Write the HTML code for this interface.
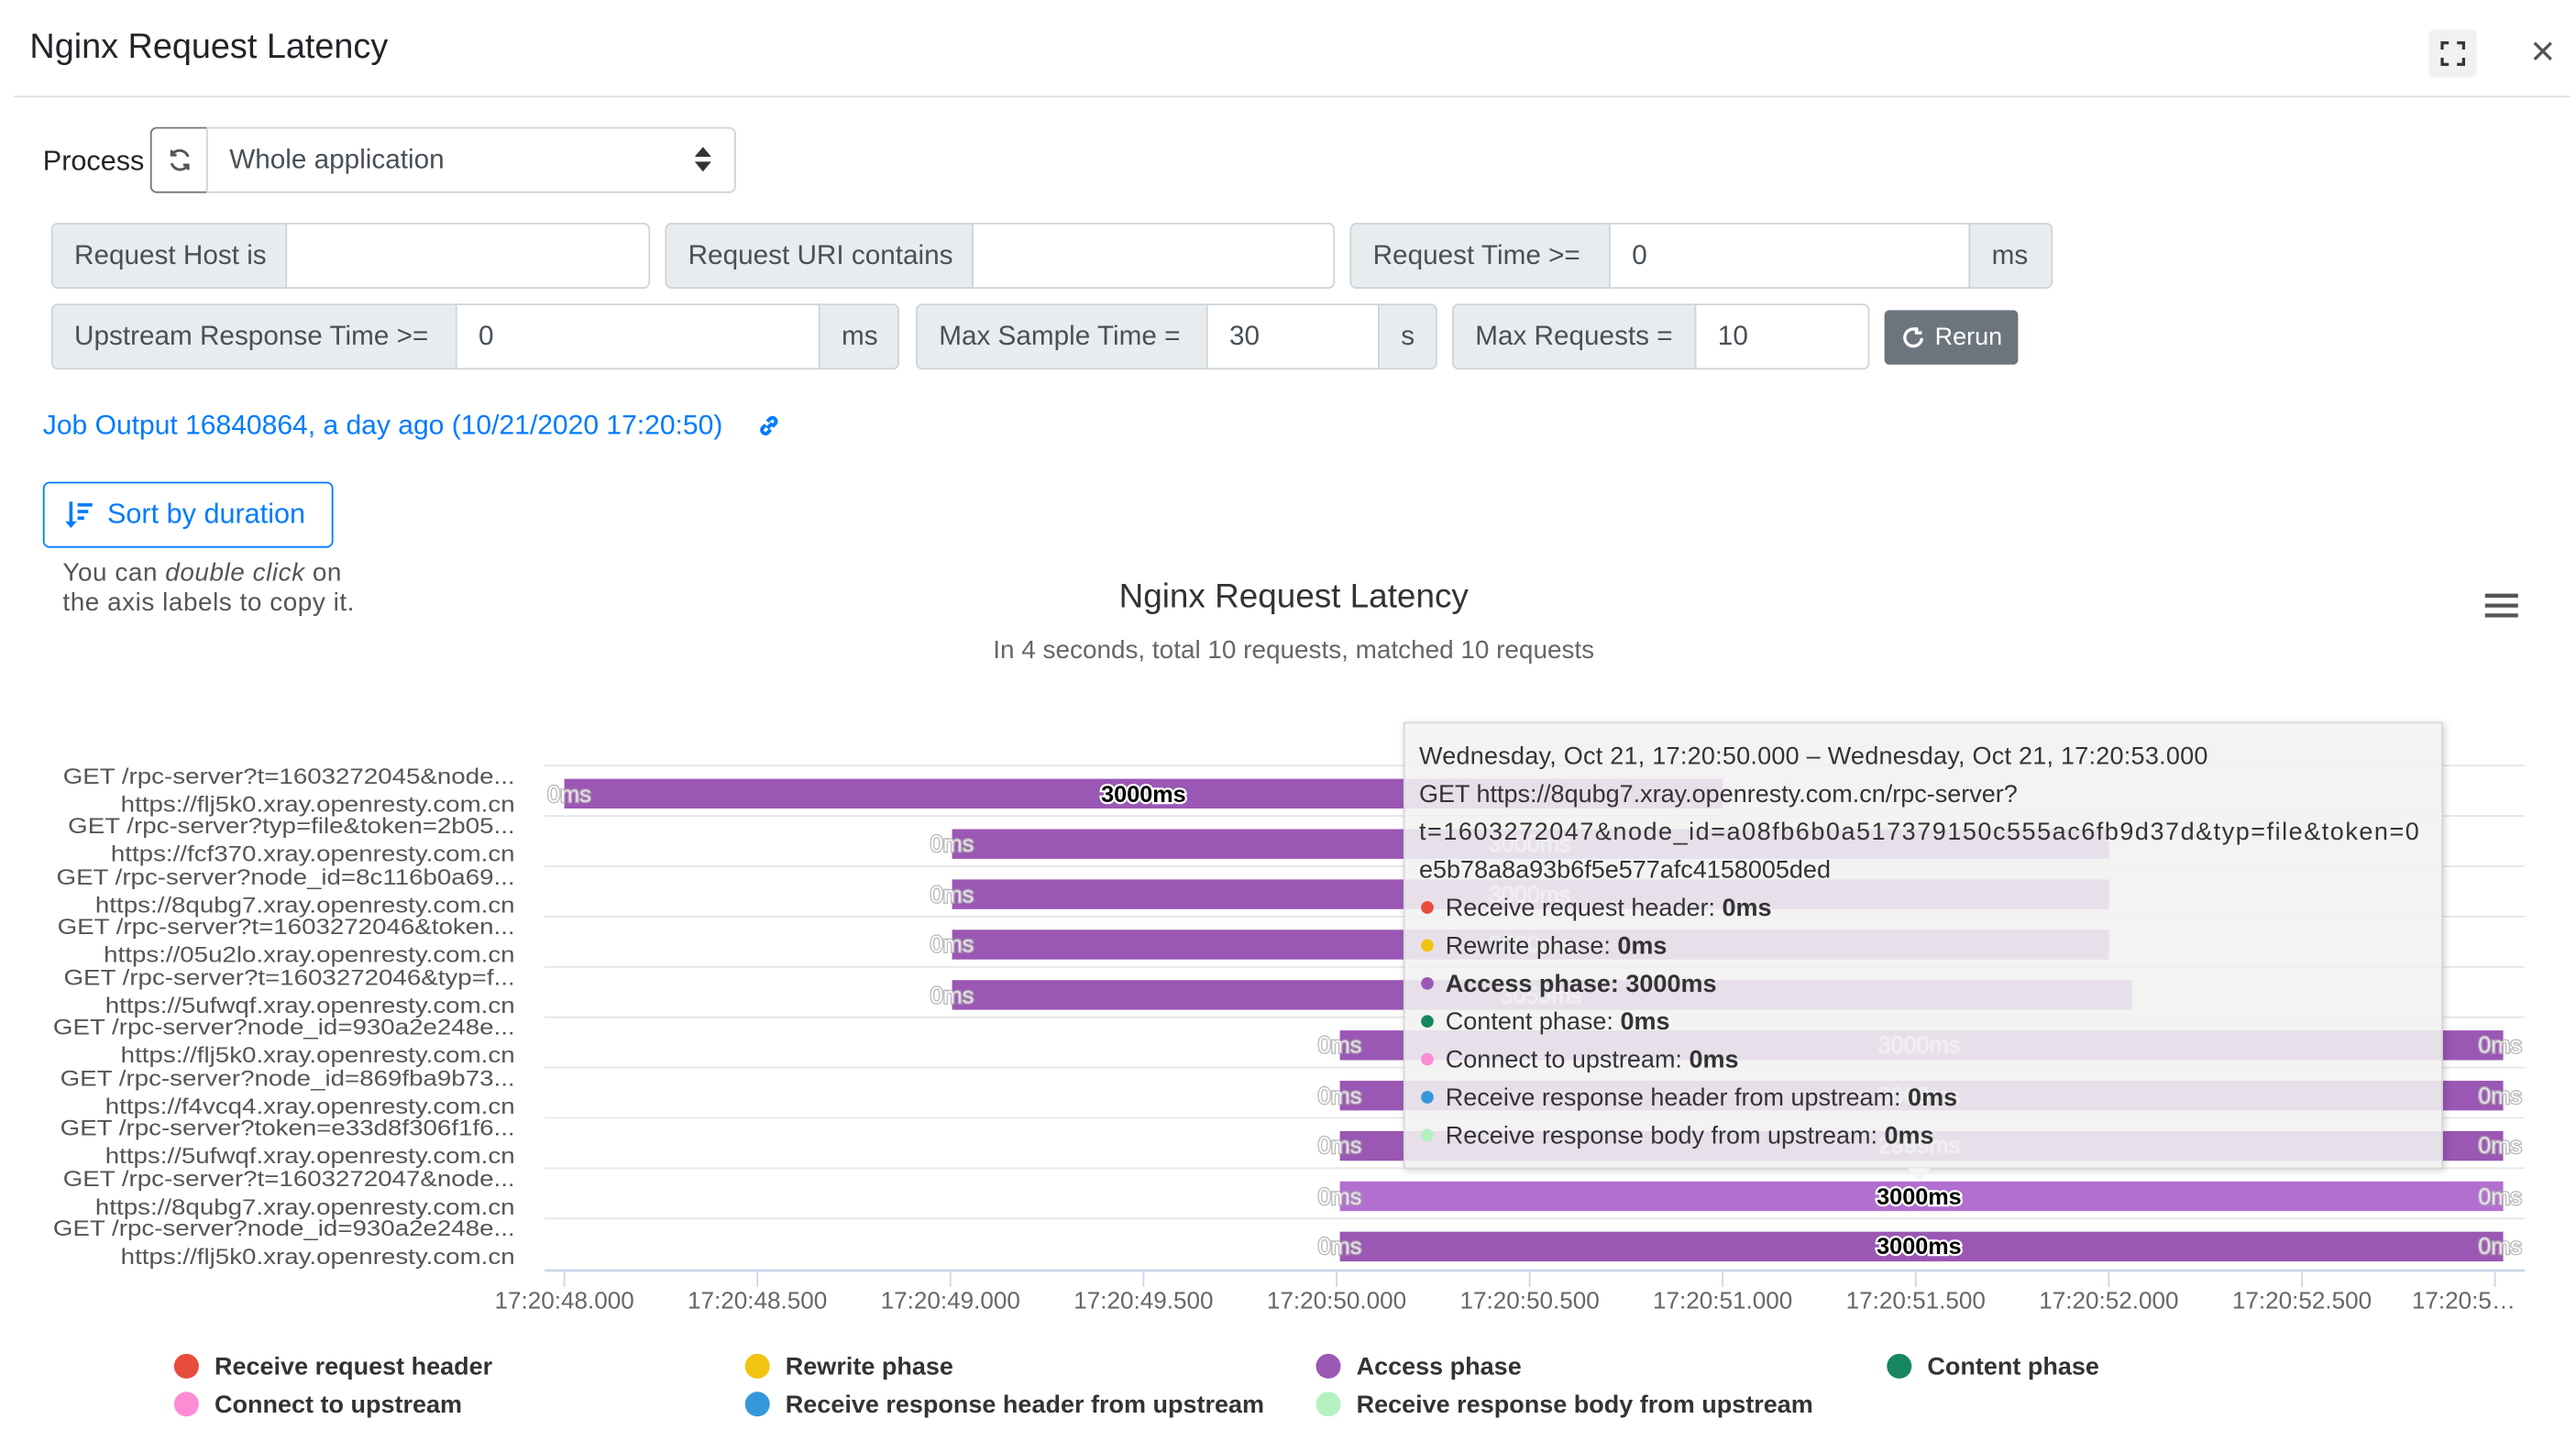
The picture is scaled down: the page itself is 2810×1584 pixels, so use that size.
<!DOCTYPE html>
<html><head><meta charset="utf-8"><style>
html,body{margin:0;padding:0;background:#fff;}
body{width:2810px;height:1583px;overflow:hidden;}
#w{position:absolute;left:0;top:0;width:1561px;height:880px;transform:scale(1.8);transform-origin:0 0;font-family:"Liberation Sans",sans-serif;color:#212529;}
.a{position:absolute;}
.box{position:absolute;box-sizing:border-box;border:1px solid #ced4da;font-size:16.5px;color:#495057;display:flex;align-items:center;padding-left:13px;}
.ad{background:#e9ecef;}
.in{background:#fff;}
</style></head><body><div id="w">
<div class="a" style="left:18px;top:17px;font-size:21px;font-weight:500;color:#212529">Nginx Request Latency</div>
<div class="a" style="left:8px;top:58px;width:1550px;height:1px;background:#dee2e6"></div>
<div class="a" style="left:1472px;top:18px;width:29px;height:29px;background:#f1f1f1;border-radius:3px"></div>
<svg class="a" style="left:1479px;top:25px" width="15" height="15" viewBox="0 0 15 15" fill="none" stroke="#333" stroke-width="1.8"><path d="M1 5V1h4M10 1h4v4M14 10v4h-4M5 14H1v-4"/></svg>
<svg class="a" style="left:1535px;top:25px" width="12" height="12" viewBox="0 0 12 12" stroke="#555" stroke-width="1.8"><path d="M1 1l10 10M11 1L1 11"/></svg>

<div class="a" style="left:26px;top:88px;font-size:17px;color:#212529">Process</div>
<div class="box" style="left:91px;top:77px;width:35px;height:40px;border-color:#6c757d;border-radius:4px 0 0 4px;padding:0;justify-content:center">
<svg width="16" height="16" viewBox="0 0 16 16" fill="none" stroke="#555" stroke-width="1.6"><path d="M13 6A5.5 5.5 0 0 0 3 5M3 2v3h3M3 10a5.5 5.5 0 0 0 10 1M13 14v-3h-3"/></svg></div>
<div class="box in" style="left:125px;top:77px;width:321px;height:40px;border-radius:0 4px 4px 0">Whole application</div>
<svg class="a" style="left:421px;top:89px" width="10" height="15" viewBox="0 0 10 15" fill="#333"><path d="M5 0L10 6H0zM5 15L0 9h10z"/></svg>

<div class="box ad" style="left:31px;top:135px;width:143px;height:40px;border-radius:4px 0 0 4px">Request Host is</div>
<div class="box in" style="left:173px;top:135px;width:221px;height:40px;border-radius:0 4px 4px 0"></div>
<div class="box ad" style="left:403px;top:135px;width:187px;height:40px;border-radius:4px 0 0 4px">Request URI contains</div>
<div class="box in" style="left:589px;top:135px;width:220px;height:40px;border-radius:0 4px 4px 0"></div>
<div class="box ad" style="left:818px;top:135px;width:158px;height:40px;border-radius:4px 0 0 4px">Request Time &gt;=</div>
<div class="box in" style="left:975px;top:135px;width:219px;height:40px">0</div>
<div class="box ad" style="left:1193px;top:135px;width:51px;height:40px;border-radius:0 4px 4px 0">ms</div>

<div class="box ad" style="left:31px;top:184px;width:246px;height:40px;border-radius:4px 0 0 4px">Upstream Response Time &gt;=</div>
<div class="box in" style="left:276px;top:184px;width:221px;height:40px">0</div>
<div class="box ad" style="left:496px;top:184px;width:49px;height:40px;border-radius:0 4px 4px 0">ms</div>
<div class="box ad" style="left:555px;top:184px;width:177px;height:40px;border-radius:4px 0 0 4px">Max Sample Time =</div>
<div class="box in" style="left:731px;top:184px;width:105px;height:40px">30</div>
<div class="box ad" style="left:835px;top:184px;width:36px;height:40px;border-radius:0 4px 4px 0">s</div>
<div class="box ad" style="left:880px;top:184px;width:148px;height:40px;border-radius:4px 0 0 4px">Max Requests =</div>
<div class="box in" style="left:1027px;top:184px;width:106px;height:40px;border-radius:0 4px 4px 0">10</div>
<div class="a" style="left:1142px;top:188px;width:81px;height:33px;background:#6c757d;border-radius:3px;color:#fff;font-size:15px;display:flex;align-items:center;justify-content:center;gap:6px">
<svg width="15" height="15" viewBox="0 0 16 16" fill="none" stroke="#fff" stroke-width="2"><path d="M13.5 8.5A5.5 5.5 0 1 1 11 3.5M10 1.5v3.5h3.5"/></svg>Rerun</div>

<div class="a" style="left:26px;top:248px;font-size:16.7px;color:#007bff">Job Output 16840864, a day ago (10/21/2020 17:20:50)</div>
<svg class="a" style="left:458px;top:250px" width="16" height="16" viewBox="0 0 16 16" fill="none" stroke="#007bff" stroke-width="2.2"><path d="M7 9.5l3-3M6 7.5L4 9.5a2.2 2.2 0 0 0 3 3l2-2M10 8.5l2-2a2.2 2.2 0 0 0-3-3l-2 2"/></svg>

<div class="a" style="left:26px;top:292px;width:176px;height:40px;box-sizing:border-box;border:1px solid #007bff;border-radius:4px;color:#007bff;font-size:17px;display:flex;align-items:center;padding-left:12px;gap:8px">
<svg width="18" height="18" viewBox="0 0 18 18" fill="#007bff"><path d="M3 1h2v12h2.5L4 17 0.5 13H3z"/><rect x="8" y="2" width="9" height="2"/><rect x="8" y="6" width="6.5" height="2"/><rect x="8" y="10" width="4" height="2"/></svg>Sort by duration</div>
<div class="a" style="left:38px;top:339px;font-size:15.5px;color:#555;line-height:18px;letter-spacing:0.3px">You can <i>double click</i> on<br>the axis labels to copy it.</div>

<svg class="a" style="left:0;top:0" width="1561" height="880" font-family="Liberation Sans, sans-serif">
<text x="784" y="368" text-anchor="middle" font-size="20.5" fill="#333">Nginx Request Latency</text>
<text x="784" y="399" text-anchor="middle" font-size="15.5" fill="#666">In 4 seconds, total 10 requests, matched 10 requests</text>
<g stroke="#555" stroke-width="2.4"><path d="M1506 361h20M1506 367h20M1506 373h20"/></g>
<g stroke="#e6e6e6" stroke-width="1">
<path d="M330 464h1200M330 494.5h1200M330 525h1200M330 555.5h1200M330 586h1200M330 616.5h1200M330 647h1200M330 677.5h1200M330 708h1200M330 738.5h1200"/>
</g>
<path d="M330 770h1200" stroke="#ccd6eb" stroke-width="1.5"/>
<g stroke="#ccd6eb"><path d="M342 770v10M459 770v10M576 770v10M693 770v10M810 770v10M927 770v10M1044 770v10M1161 770v10M1278 770v10M1395 770v10M1512 770v10"/></g>
<g font-size="14.5" fill="#666" text-anchor="middle">
<text x="342" y="793">17:20:48.000</text><text x="459" y="793">17:20:48.500</text><text x="576" y="793">17:20:49.000</text><text x="693" y="793">17:20:49.500</text><text x="810" y="793">17:20:50.000</text><text x="927" y="793">17:20:50.500</text><text x="1044" y="793">17:20:51.000</text><text x="1161" y="793">17:20:51.500</text><text x="1278" y="793">17:20:52.000</text><text x="1395" y="793">17:20:52.500</text><text x="1493" y="793">17:20:5…</text>
</g>
<g fill="#9b57b4">
<rect x="342" y="472" width="702" height="18"/>
<rect x="577" y="502.5" width="701" height="18"/>
<rect x="577" y="533" width="701" height="18"/>
<rect x="577" y="563.5" width="701" height="18"/>
<rect x="577" y="594" width="715" height="18"/>
<rect x="812" y="624.5" width="705" height="18"/>
<rect x="812" y="655" width="705" height="18"/>
<rect x="812" y="685.5" width="705" height="18"/>
<rect x="812" y="716" width="705" height="18" fill="#b26fcf"/>
<rect x="812" y="746.5" width="705" height="18"/>
</g>
<g font-size="14" font-weight="bold" text-anchor="middle" paint-order="stroke" stroke="#fff" stroke-width="2.5" fill="#000">
<text x="693" y="486">3000ms</text>
<text x="1163" y="730">3000ms</text>
<text x="1163" y="760">3000ms</text>
</g>
<g font-size="14" text-anchor="middle" paint-order="stroke" stroke="#aaa" stroke-width="1.5" fill="#fff" opacity="0.8">
<text x="345" y="486">0ms</text><text x="577" y="516">0ms</text><text x="577" y="547">0ms</text><text x="577" y="577">0ms</text><text x="577" y="608">0ms</text>
<text x="812" y="638">0ms</text><text x="812" y="669">0ms</text><text x="812" y="699">0ms</text><text x="812" y="730">0ms</text><text x="812" y="760">0ms</text>
<text x="1515" y="638">0ms</text><text x="1515" y="669">0ms</text><text x="1515" y="699">0ms</text><text x="1515" y="730">0ms</text><text x="1515" y="760">0ms</text>
<text x="927" y="516">3000ms</text><text x="927" y="547">3000ms</text><text x="927" y="577">3000ms</text><text x="934" y="608">3059ms</text>
<text x="1163" y="638">3000ms</text><text x="1163" y="669">3000ms</text><text x="1163" y="699">2999ms</text>
</g>
<g font-size="13.5" fill="#555" text-anchor="end" transform="translate(312,0) scale(1.14,1) translate(-312,0)">
<text x="312" y="475">GET /rpc-server?t=1603272045&amp;node...</text><text x="312" y="492">https://flj5k0.xray.openresty.com.cn</text>
<text x="312" y="505">GET /rpc-server?typ=file&amp;token=2b05...</text><text x="312" y="522">https://fcf370.xray.openresty.com.cn</text>
<text x="312" y="536">GET /rpc-server?node_id=8c116b0a69...</text><text x="312" y="553">https://8qubg7.xray.openresty.com.cn</text>
<text x="312" y="566">GET /rpc-server?t=1603272046&amp;token...</text><text x="312" y="583">https://05u2lo.xray.openresty.com.cn</text>
<text x="312" y="597">GET /rpc-server?t=1603272046&amp;typ=f...</text><text x="312" y="614">https://5ufwqf.xray.openresty.com.cn</text>
<text x="312" y="627">GET /rpc-server?node_id=930a2e248e...</text><text x="312" y="644">https://flj5k0.xray.openresty.com.cn</text>
<text x="312" y="658">GET /rpc-server?node_id=869fba9b73...</text><text x="312" y="675">https://f4vcq4.xray.openresty.com.cn</text>
<text x="312" y="688">GET /rpc-server?token=e33d8f306f1f6...</text><text x="312" y="705">https://5ufwqf.xray.openresty.com.cn</text>
<text x="312" y="719">GET /rpc-server?t=1603272047&amp;node...</text><text x="312" y="736">https://8qubg7.xray.openresty.com.cn</text>
<text x="312" y="749">GET /rpc-server?node_id=930a2e248e...</text><text x="312" y="766">https://flj5k0.xray.openresty.com.cn</text>
</g>
<g>
<rect x="851" y="438" width="629" height="270" fill="rgba(248,248,248,0.86)" stroke="#d8d8d8" style="filter:drop-shadow(1px 1px 2px rgba(0,0,0,0.2))"/>
<path d="M1156 708l7 8 7-8z" fill="#f4f4f4"/>
<g font-size="15" fill="#333">
<text x="860" y="463" textLength="478">Wednesday, Oct 21, 17:20:50.000 – Wednesday, Oct 21, 17:20:53.000</text>
<text x="860" y="486">GET https://8qubg7.xray.openresty.com.cn/rpc-server?</text>
<text x="860" y="509" textLength="606">t=1603272047&amp;node_id=a08fb6b0a517379150c555ac6fb9d37d&amp;typ=file&amp;token=0</text>
<text x="860" y="532">e5b78a8a93b6f5e577afc4158005ded</text>
<text x="876" y="555">Receive request header: <tspan font-weight="bold">0ms</tspan></text>
<text x="876" y="578">Rewrite phase: <tspan font-weight="bold">0ms</tspan></text>
<text x="876" y="601" font-weight="bold">Access phase: 3000ms</text>
<text x="876" y="624">Content phase: <tspan font-weight="bold">0ms</tspan></text>
<text x="876" y="647">Connect to upstream: <tspan font-weight="bold">0ms</tspan></text>
<text x="876" y="670">Receive response header from upstream: <tspan font-weight="bold">0ms</tspan></text>
<text x="876" y="693">Receive response body from upstream: <tspan font-weight="bold">0ms</tspan></text>
</g>
<circle cx="865" cy="550" r="3.8" fill="#e74c3c"/><circle cx="865" cy="573" r="3.8" fill="#f1c40f"/><circle cx="865" cy="596" r="3.8" fill="#9b59b6"/><circle cx="865" cy="619" r="3.8" fill="#16875f"/><circle cx="865" cy="642" r="3.8" fill="#fd8cd4"/><circle cx="865" cy="665" r="3.8" fill="#3498db"/><circle cx="865" cy="688" r="3.8" fill="#b5f1c0"/>
</g>
<g font-size="15" font-weight="bold" fill="#333">
<circle cx="113" cy="828" r="7.5" fill="#e74c3c"/><text x="130" y="833">Receive request header</text>
<circle cx="459" cy="828" r="7.5" fill="#f1c40f"/><text x="476" y="833">Rewrite phase</text>
<circle cx="805" cy="828" r="7.5" fill="#9b59b6"/><text x="822" y="833">Access phase</text>
<circle cx="1151" cy="828" r="7.5" fill="#16875f"/><text x="1168" y="833">Content phase</text>
<circle cx="113" cy="851" r="7.5" fill="#fd8cd4"/><text x="130" y="856">Connect to upstream</text>
<circle cx="459" cy="851" r="7.5" fill="#3498db"/><text x="476" y="856">Receive response header from upstream</text>
<circle cx="805" cy="851" r="7.5" fill="#b5f1c0"/><text x="822" y="856">Receive response body from upstream</text>
</g>
</svg>
</div></body></html>
